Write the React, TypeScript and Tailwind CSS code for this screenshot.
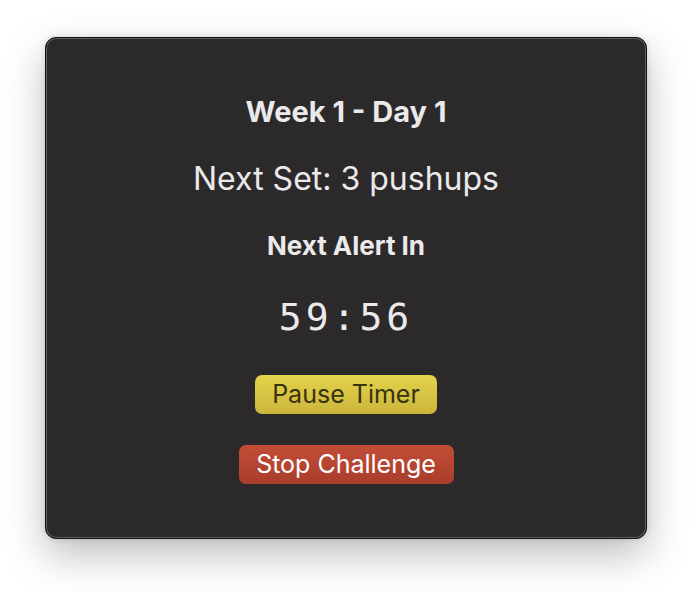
import React from "react";

export default function App() {
  return (
    <div className="w-[692px] h-[592px] bg-white pt-[37px] pl-[45px]">
      <div className="w-[602px] h-[502px] rounded-[11px] bg-[#2c292b] border border-[#111011] shadow-[inset_0_0_0_1px_rgba(255,255,255,0.26),0_0_6px_rgba(0,0,0,0.12),0_16px_40px_rgba(0,0,0,0.26)] flex flex-col items-center text-[#ebe9ea] pt-[59px]" style={{ fontFamily: "Inter, 'Noto Sans', sans-serif" }}>
        <div className="text-[29px] leading-none font-bold">Week 1 - Day 1</div>
        <div className="text-[32px] leading-none mt-[37px]">Next Set: 3 pushups</div>
        <div className="text-[26px] leading-none font-bold mt-[38px]">Next Alert In</div>
        <div className="text-[38px] leading-none mt-[39px] tracking-[4px]" style={{ fontFamily: "'DejaVu Sans Mono', monospace" }}>59:56</div>
        <button className="mt-[39px] w-[182px] h-[39px] rounded-[7px] bg-gradient-to-b from-[#e4d24c] to-[#cbb63b] text-[#38330e] text-[25px] leading-none">Pause Timer</button>
        <button className="mt-[31px] w-[215px] h-[39px] rounded-[7px] bg-gradient-to-b from-[#c24d37] to-[#a93d2b] text-white text-[25px] leading-none">Stop Challenge</button>
      </div>
    </div>
  );
}
